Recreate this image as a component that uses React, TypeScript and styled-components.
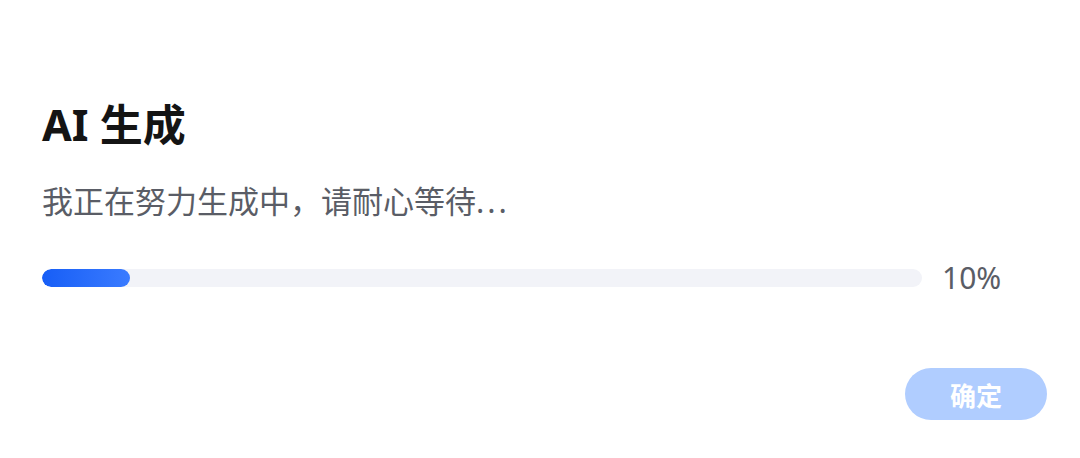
import React from 'react';
import styled, {createGlobalStyle} from 'styled-components';

const GlobalStyle = createGlobalStyle`
	html, body {
		margin: 0;
		padding: 0;
		background: #ffffff;
	}
	body {
		font-family: "Noto Sans", "Noto Sans CJK SC", sans-serif;
	}
`

const Dialog = styled.div`
	width: 1080px;
	height: 458px;
	box-sizing: border-box;
	padding: 96px 33px 0 42px;
	display: flex;
	flex-direction: column;
`

const Title = styled.h1`
	margin: 0;
	font-size: 43px;
	line-height: 58px;
	font-weight: 700;
	color: #141414;
`

const Message = styled.p`
	margin: 26px 0 0;
	font-size: 31px;
	line-height: 42px;
	color: #5a5d66;
`

const Dots = styled.span`
	letter-spacing: 3px;
`

const ProgressRow = styled.div`
	display: flex;
	align-items: center;
	gap: 20px;
	margin-top: 41px;
	height: 30px;
`

const Track = styled.div`
	width: 880px;
	height: 18px;
	border-radius: 9px;
	background: #f2f3f8;
	overflow: hidden;
`

const Fill = styled.div`
	height: 100%;
	border-radius: 9px;
	background: linear-gradient(90deg, #175ef6 0%, #3a7bff 100%);
`

const Percent = styled.span`
	font-size: 30px;
	line-height: 30px;
	color: #5a5d66;
`

const Footer = styled.div`
	display: flex;
	justify-content: flex-end;
	margin-top: 75px;
`

const ConfirmButton = styled.button`
	width: 142px;
	height: 52px;
	border: none;
	border-radius: 26px;
	background: #b0cdff;
	color: #ffffff;
	font-family: "Noto Sans CJK SC", sans-serif;
	font-size: 26px;
	font-weight: 700;
	cursor: not-allowed;
	outline: none;
`

const App = () => {
	const progress = 10

	return (
		<>
			<GlobalStyle />
			<Dialog>
				<Title>AI 生成</Title>
				<Message>我正在努力生成中，请耐心等待<Dots>...</Dots></Message>
				<ProgressRow>
					<Track>
						<Fill style={{width: `${progress}%`}} />
					</Track>
					<Percent>{progress}%</Percent>
				</ProgressRow>
				<Footer>
					<ConfirmButton disabled>确定</ConfirmButton>
				</Footer>
			</Dialog>
		</>
	);
};

export default App;
